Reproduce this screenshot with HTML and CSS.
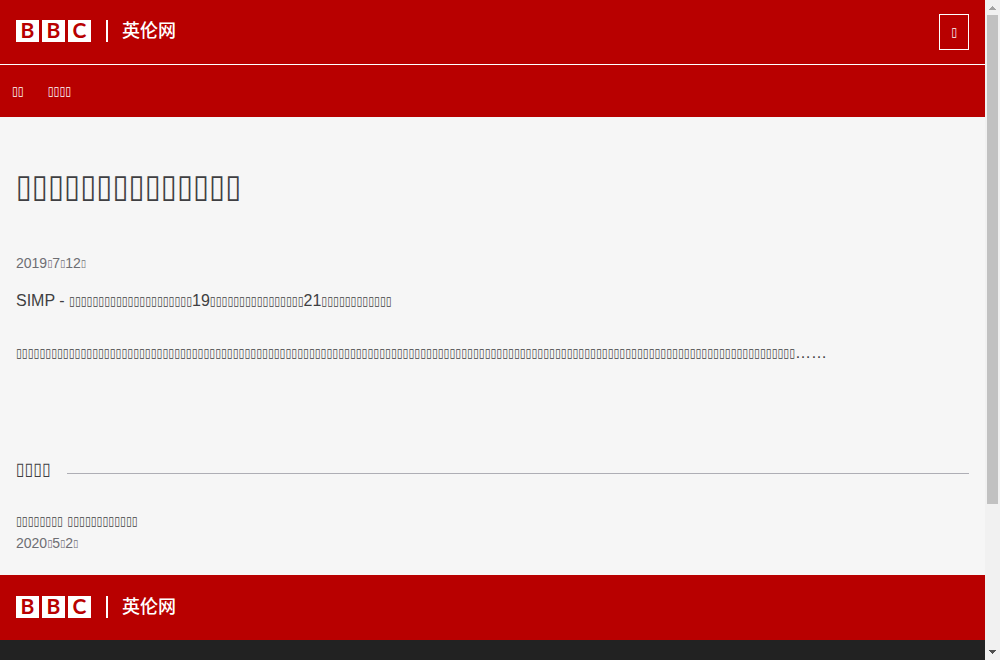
FILE: index.html
```
<!DOCTYPE html>
<html lang="zh-Hans">
<head>
<meta charset="utf-8">
<meta name="viewport" content="width=device-width, initial-scale=1">
<title>BBC 英伦网</title>
<link rel="stylesheet" href="styles.css">
</head>
<body>
<div class="viewport">
  <div class="page">
    <header class="banner">
      <a class="brand" href="#" aria-label="BBC 英伦网">
        <svg class="logo" viewBox="0 0 162 30" width="162" height="30">
          <path class="logo-block" d="M0 3h23v22H0zM26 3h23v22H26zM52 3h23v22H52zM90 3h2v22h-2z"/>
          <text class="logo-letter" x="11.5" y="21">B</text>
          <text class="logo-letter" x="37.5" y="21">B</text>
          <text class="logo-letter" x="63.5" y="21">C</text>
          <text class="logo-name" x="106" y="20">英伦网</text>
        </svg>
      </a>
      <button class="script-switch" type="button"><span class="box">▯</span></button>
    </header>
    <nav class="nav">
      <a class="nav-link" href="#"><span class="box">▯▯</span></a>
      <a class="nav-link" href="#"><span class="box">▯▯▯▯</span></a>
    </nav>
    <main class="content">
      <h1 class="headline"><span class="box">▯▯▯▯▯▯▯▯▯▯▯▯▯▯</span></h1>
      <time class="date" datetime="2019-07-12">2019<span class="box">▯</span>7<span class="box">▯</span>12<span class="box">▯</span></time>
      <p class="paragraph">SIMP - <span class="box">▯▯▯▯▯▯▯▯▯▯▯▯▯▯▯▯▯▯▯▯▯</span>19<span class="box">▯▯▯▯▯▯▯▯▯▯▯▯▯▯▯▯</span>21<span class="box">▯▯▯▯▯▯▯▯▯▯▯▯</span></p>
      <p class="paragraph"><span class="box">▯▯▯▯▯▯▯▯▯▯</span><span class="box">▯▯▯▯▯▯▯▯▯▯</span><span class="box">▯▯▯▯▯▯▯▯▯▯</span><span class="box">▯▯▯▯▯▯▯▯▯▯</span><span class="box">▯▯▯▯▯▯▯▯▯▯</span><span class="box">▯▯▯▯▯▯▯▯▯▯</span><span class="box">▯▯▯▯▯▯▯▯▯▯</span><span class="box">▯▯▯▯▯▯▯▯▯▯</span><span class="box">▯▯▯▯▯▯▯▯▯▯</span><span class="box">▯▯▯▯▯▯▯▯▯▯</span><span class="box">▯▯▯▯▯▯▯▯▯▯</span><span class="box">▯▯▯▯▯▯▯▯▯▯</span><span class="box">▯▯▯▯▯▯▯▯▯▯</span><span class="box">▯▯▯</span>……</p>
      <section class="related">
        <h2 class="related-title"><span><span class="box">▯▯▯▯</span></span></h2>
        <a class="related-link" href="#"><span class="box">▯▯▯▯▯▯▯▯</span> <span class="box">▯▯▯▯▯▯▯▯▯▯▯▯</span></a>
        <time class="date" datetime="2020-05-02">2020<span class="box">▯</span>5<span class="box">▯</span>2<span class="box">▯</span></time>
      </section>
    </main>
    <footer class="footer">
      <div class="banner">
        <a class="brand" href="#" aria-label="BBC 英伦网">
          <svg class="logo" viewBox="0 0 162 30" width="162" height="30">
            <path class="logo-block" d="M0 3h23v22H0zM26 3h23v22H26zM52 3h23v22H52zM90 3h2v22h-2z"/>
            <text class="logo-letter" x="11.5" y="21">B</text>
            <text class="logo-letter" x="37.5" y="21">B</text>
            <text class="logo-letter" x="63.5" y="21">C</text>
            <text class="logo-name" x="106" y="20">英伦网</text>
          </svg>
        </a>
      </div>
      <div class="legal"></div>
    </footer>
  </div>
  <div class="scrollbar" aria-hidden="true">
    <svg class="arrow arrow-up" viewBox="0 0 15 15" width="15" height="15"><path d="M7 6h1v1h1v1h1v1h1v1H4V9h1V8h1V7h1z"/></svg>
    <div class="track"><div class="thumb"></div></div>
    <svg class="arrow" viewBox="0 0 15 15" width="15" height="15"><path d="M4 5h7v1h-1v1H9v1H8v1H7V8H6V7H5V6H4z"/></svg>
  </div>
</div>
</body>
</html>
```
FILE: styles.css
```
* {
  box-sizing: border-box;
}

body {
  margin: 0;
  background: #f6f6f6;
  color: #3f3f42;
  font: 16px/20px "Liberation Sans", Arial, sans-serif;
}

a {
  color: inherit;
  text-decoration: none;
}

.box {
  font-family: "DejaVu Sans Condensed", "DejaVu Sans", sans-serif;
  font-size: 74%;
  line-height: 1;
  vertical-align: 0.12em;
  word-break: break-all;
}

.viewport {
  display: flex;
  height: 100vh;
  overflow: hidden;
}

.page {
  flex: 1;
  min-width: 0;
}

.banner {
  display: flex;
  align-items: center;
  justify-content: space-between;
  min-height: 64px;
  padding: 0 16px;
  background: #b80000;
  color: #fff;
}

.brand,
.logo {
  display: block;
}

.logo-block {
  fill: #fff;
}

.logo-letter {
  fill: #b80000;
  font: 700 21px Lato, sans-serif;
  text-anchor: middle;
}

.logo-name {
  fill: #fff;
  font: 500 18px "Noto Sans CJK SC", sans-serif;
}

.script-switch {
  height: 36px;
  padding: 0 11px;
  border: 1px solid #fff;
  background: #b80000;
  color: #fff;
  font: inherit;
}

.nav {
  display: flex;
  gap: 24px;
  padding: 16px 12px;
  border-top: 1px solid #fff;
  background: #b80000;
  color: #fff;
}

.nav-link {
  height: 20px;
}

.content {
  padding: 45px 16px 21px;
}

.headline {
  margin: 0 0 42px;
  font-size: 44px;
  font-weight: 400;
  line-height: 48px;
}

.date {
  display: block;
  color: #6e6e73;
  font-size: 14px;
  line-height: 22px;
}

.paragraph {
  margin: 0;
  padding: 15px 0 13px;
  line-height: 24px;
}

.related {
  padding-top: 77px;
}

.related-title {
  display: flex;
  align-items: center;
  gap: 16px;
  margin: 0 0 27px;
  font-size: 24px;
  font-weight: 400;
  line-height: 28px;
}

.related-title::after {
  flex: 1;
  margin-top: 9px;
  border-top: 1px solid #aeaeb5;
  content: "";
}

.related-link {
  display: block;
  line-height: 22px;
}

.footer {
  border-top: 1px solid #b80000;
}

.legal {
  min-height: 40px;
  background: #222;
}

.scrollbar {
  display: flex;
  flex-direction: column;
  width: 15px;
  background: #f1f1f1;
}

.track {
  flex: 1;
  padding: 0 2px;
}

.thumb {
  height: 489px;
  max-height: 78%;
  background: #c1c1c1;
}

.arrow {
  fill: #505050;
}

.arrow-up {
  fill: #a3a3a3;
}
```
